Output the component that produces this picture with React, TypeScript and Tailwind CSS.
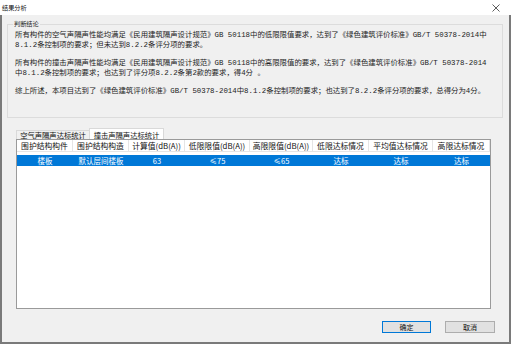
const cjk = { fontFamily: '"Noto Sans CJK SC", "Noto Sans", sans-serif' };
const mono = { fontFamily: '"Liberation Mono", "Noto Sans CJK SC", monospace' };

const columns = [
  { label: "围护结构构件", value: "楼板", width: "w-[56px]" },
  { label: "围护结构构造", value: "默认层间楼板", width: "w-[56px]" },
  { label: "计算值(dB(A))", value: "63", width: "w-[56px]" },
  { label: "低限限值(dB(A))", value: "≤75", width: "w-[65px]" },
  { label: "高限限值(dB(A))", value: "≤65", width: "w-[63px]" },
  { label: "低限达标情况", value: "达标", width: "w-[56px]" },
  { label: "平均值达标情况", value: "达标", width: "w-[64px]" },
  { label: "高限达标情况", value: "达标", width: "w-[57px]" },
];

const paragraphs = [
  [
    "所有构件的空气声隔声性能均满足《民用建筑隔声设计规范》GB 50118中的低限限值要求，达到了《绿色建筑评价标准》GB/T 50378-2014中",
    "8.1.2条控制项的要求；但未达到8.2.2条评分项的要求。",
  ],
  [
    "所有构件的撞击声隔声性能均满足《民用建筑隔声设计规范》GB 50118中的高限限值的要求，达到了《绿色建筑评价标准》GB/T 50378-2014",
    "中8.1.2条控制项的要求；也达到了评分项8.2.2条第2款的要求，得4分 。",
  ],
  [
    "综上所述，本项目达到了《绿色建筑评价标准》GB/T 50378-2014中8.1.2条控制项的要求；也达到了8.2.2条评分项的要求，总得分为4分。",
  ],
];

function CloseIcon() {
  return (
    <svg width="8" height="8" viewBox="0 0 8 8">
      <path d="M0.5 0.5 L7.5 7.5 M7.5 0.5 L0.5 7.5" stroke="#333" strokeWidth="0.8" fill="none" />
    </svg>
  );
}

export default function App() {
  return (
    <div className="w-[511px] h-[344px] flex flex-col overflow-hidden bg-white" style={cjk}>
      {/* title bar */}
      <div className="h-[15px] flex items-center justify-between pl-[2px] pr-[11px] bg-white">
        <span className="text-[6.2px] leading-[8px] text-[#111]">结果分析</span>
        <CloseIcon />
      </div>

      <div className="flex-1 flex flex-col bg-[#f0f0f0] border-l-2 border-r-2 border-b-2 border-[#7a7a7a]">
        <fieldset className="mt-[5px] ml-[5px] mr-[6px] border border-[#dcdcdc] pl-[7px] pr-[4px] pb-[21px] min-w-0">
          <legend className="-ml-[2px] px-[1px] text-[6.2px] leading-[8px] text-[#222]">判断结论</legend>
          <div className="mt-[2px] text-[7.4px] leading-[10px] text-[#222]" style={mono}>
            {paragraphs.map((lines, i) => (
              <div key={i} className={i > 0 ? "mt-[8px]" : ""}>
                {lines.map((line) => (
                  <div key={line} className="whitespace-nowrap">
                    {line}
                  </div>
                ))}
              </div>
            ))}
          </div>
        </fieldset>

        {/* tabs */}
        <div className="mt-[10px] ml-[14px] flex items-end">
          <div className="w-[73px] h-[9px] flex items-center justify-center border-t border-l border-[#d9d9d9] bg-[#f0f0f0] text-[7.3px] leading-[9px] text-[#111]">
            空气声隔声达标统计
          </div>
          <div className="w-[75px] h-[11px] flex items-center justify-center border-t border-l border-r border-[#d9d9d9] bg-white text-[7.3px] leading-[9px] text-[#111] pt-[2px]">
            撞击声隔声达标统计
          </div>
        </div>

        {/* list */}
        <div className="ml-[14px] w-[475px] h-[170px] border border-[#9a9a9a] bg-white flex flex-col">
          <div className="h-[12px] flex border-b border-[#e5e5e5]">
            {columns.map((c) => (
              <div
                key={c.label}
                className={`${c.width} shrink-0 flex items-center justify-center border-r border-[#e5e5e5] text-[7.8px] leading-[10px] text-[#111] whitespace-nowrap overflow-hidden`}
              >
                {c.label}
              </div>
            ))}
          </div>
          <div className="mt-[3px] h-[11px] flex bg-[#0078d7]">
            {columns.map((c) => (
              <div
                key={c.label}
                className={`${c.width} shrink-0 flex items-center justify-center text-[7.5px] leading-[10px] text-white whitespace-nowrap`}
              >
                {c.value}
              </div>
            ))}
          </div>
        </div>

        {/* buttons */}
        <div className="mt-[12px] mr-[14px] flex justify-end gap-[14px]">
          <button className="w-[49px] h-[12px] flex items-center justify-center bg-[#e1e1e1] border border-[#0078d7] text-[7px] leading-[9px] text-[#111]">
            确定
          </button>
          <button className="w-[50px] h-[12px] flex items-center justify-center bg-[#e1e1e1] border border-[#adadad] text-[7px] leading-[9px] text-[#111]">
            取消
          </button>
        </div>
      </div>
    </div>
  );
}
